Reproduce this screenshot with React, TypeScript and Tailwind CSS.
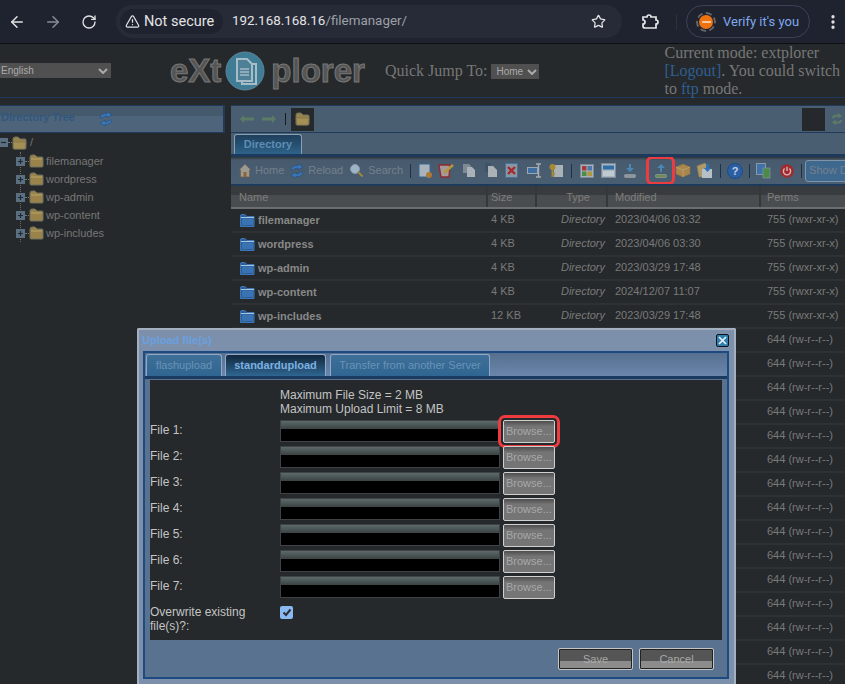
import { ArrowLeft, ArrowRight, EllipsisVertical, RotateCw, Star, TriangleAlert } from "lucide-react";

const SANS = "font-['Liberation_Sans',Arial,sans-serif]";
const SERIF = "font-['Liberation_Serif','Times_New_Roman',serif]";

const Folder = ({ open = false }: { open?: boolean }) => (
  <svg width="15" height="14" viewBox="0 0 15 14" className="shrink-0">
    <path d="M1 3 Q1 1 3 1 H6 L8 3 H13 Q14 3 14 4 V12 Q14 13 13 13 H2 Q1 13 1 12 Z" fill="#9a834a" stroke="#6f6f60" strokeWidth="1" />
    {open ? <path d="M1 6 H14 L13 13 H2 Z" fill="#a68f52" stroke="#77715a" strokeWidth="0.7" /> : <path d="M2 5 H13" stroke="#b8a468" strokeWidth="1" />}
  </svg>
);

const BlueFolder = () => (
  <svg width="15" height="13" viewBox="0 0 15 13" className="shrink-0">
    <path d="M0.5 2 Q0.5 0.5 2 0.5 H5 L7 2.5 H14 V12.5 H0.5 Z" fill="#2a5c96" stroke="#3f76b4" />
    <path d="M2 4.5 H13 V11 H2 Z" fill="#3a73b3" />
    <path d="M1 3.5 H14" stroke="#a9c4dc" strokeWidth="1" />
  </svg>
);

const RefreshBlue = () => (
  <svg width="14" height="16" viewBox="1 0 14 16" className="shrink-0">
    <path d="M2 7 Q3 2 9 2.5 V0.8 L14 4 L9 7 V5 Q5 5 4.5 7 Z" fill="#3a77b8" stroke="#244e80" strokeWidth="0.6" />
    <path d="M14 9 Q13 14 7 13.5 V15.2 L2 12 L7 9 V11 Q11 11 11.5 9 Z" fill="#3a77b8" stroke="#244e80" strokeWidth="0.6" />
  </svg>
);

const TreeBox = ({ minus = false }: { minus?: boolean }) => (
  <span className="flex h-[9px] w-[9px] shrink-0 items-center justify-center bg-[#5c6f80]">
    <svg width="7" height="7" viewBox="0 0 7 7">
      <path d={minus ? "M1 3.5 H6" : "M1 3.5 H6 M3.5 1 V6"} stroke="#1d2a36" strokeWidth="1.2" />
    </svg>
  </span>
);

const Sep = ({ className }: { className: string }) => <span className={`h-[14px] w-px shrink-0 bg-[#1c3047] ${className}`} />;

const ToolIcons: Record<string, React.ReactNode> = {
  home: (
    <svg width="14" height="15" viewBox="0 0 14 15">
      <path d="M7 1 L13 7 H11.5 V14 H2.5 V7 H1 Z" fill="#9a9a90" stroke="#6c5c50" strokeWidth="0.7" />
      <rect x="5.5" y="9" width="3" height="5" fill="#94623a" />
    </svg>
  ),
  search: (
    <svg width="15" height="15" viewBox="0 0 15 15">
      <circle cx="6" cy="6" r="4.5" fill="#9cb4c6" stroke="#8a9aa6" />
      <path d="M9.5 9.5 L13.5 13.5" stroke="#a7853f" strokeWidth="2" />
    </svg>
  ),
  add: (
    <svg width="15" height="16" viewBox="0 0 15 16">
      <rect x="1" y="1" width="11" height="13" fill="#a9b3bb" stroke="#3d6594" />
      <circle cx="11" cy="12" r="3" fill="#ad7a36" />
    </svg>
  ),
  edit: (
    <svg width="17" height="15" viewBox="0 0 17 15">
      <path d="M1 2 H12 L11 14 H3 Z" fill="#a89a9a" stroke="#8f2a2e" strokeWidth="1.4" />
      <path d="M6 10 L15 2" stroke="#b09a3c" strokeWidth="2.4" />
    </svg>
  ),
  copy: (
    <svg width="14" height="15" viewBox="0 0 14 15">
      <path d="M1 1 H7 L9 3 V10 H1 Z" fill="#7f8a94" />
      <path d="M5 4 H10 L13 7 V14 H5 Z" fill="#aab2b8" />
    </svg>
  ),
  move: (
    <svg width="13" height="15" viewBox="0 0 13 15">
      <path d="M0 0 H6 V9 H0 Z" fill="#3f5268" />
      <path d="M3 3 H8 L12 7 V14 H3 Z" fill="#aab2b8" />
    </svg>
  ),
  del: (
    <svg width="14" height="15" viewBox="0 0 14 15">
      <rect x="0.5" y="0.5" width="12" height="14" fill="#8a97a3" stroke="#4a7199" />
      <path d="M3 4 L10 11 M10 4 L3 11" stroke="#a8282c" strokeWidth="2.4" />
    </svg>
  ),
  rename: (
    <svg width="16" height="15" viewBox="0 0 16 15">
      <rect x="0.5" y="4.5" width="10" height="6" fill="#3f6ea0" stroke="#9aa6b0" />
      <path d="M9 1 H14 M11.5 1 V14 M9 14 H14" stroke="#a9adb0" strokeWidth="1.4" />
    </svg>
  ),
  key: (
    <svg width="14" height="15" viewBox="0 0 14 15">
      <rect x="5" y="2" width="9" height="12" fill="#aab2b8" />
      <circle cx="3.5" cy="4" r="3" fill="#a88a34" />
      <path d="M3.5 6 V14 M3.5 11 H6" stroke="#a88a34" strokeWidth="2" />
    </svg>
  ),
  view: (
    <svg width="14" height="14" viewBox="0 0 14 14">
      <rect x="0.5" y="0.5" width="13" height="13" fill="#a8b0b8" stroke="#7c8a98" />
      <rect x="2" y="2" width="4.5" height="4.5" fill="#a8393a" />
      <rect x="7.5" y="2" width="4.5" height="4.5" fill="#4a7bb0" />
      <rect x="2" y="7.5" width="4.5" height="4.5" fill="#4f8c4a" />
      <rect x="7.5" y="7.5" width="4.5" height="4.5" fill="#b0963e" />
    </svg>
  ),
  win: (
    <svg width="15" height="15" viewBox="0 0 15 15">
      <rect x="0.5" y="0.5" width="14" height="14" fill="#a8b4bf" stroke="#7c8a98" />
      <rect x="2" y="2.5" width="11" height="4" fill="#2f6ea8" />
      <rect x="2" y="8" width="11" height="5" fill="#c0c8d0" />
    </svg>
  ),
  down: (
    <svg width="14" height="16" viewBox="0 0 14 16">
      <path d="M6 1 H8 V5 H11 L7 9 L3 5 H6 Z" fill="#4a86b4" />
      <rect x="1.5" y="11.5" width="11" height="3" rx="1" fill="#8f979c" stroke="#a9b1b6" strokeWidth="0.5" />
    </svg>
  ),
  up: (
    <svg width="14" height="16" viewBox="0 0 14 16">
      <path d="M6 9 H8 V5 H11 L7 1 L3 5 H6 Z" fill="#4a86b4" />
      <rect x="1.5" y="11.5" width="11" height="3" rx="1" fill="#6f8a55" stroke="#a9b1b6" strokeWidth="0.5" />
    </svg>
  ),
  box: (
    <svg width="16" height="15" viewBox="0 0 16 15">
      <path d="M1 4 L8 1 L15 4 V11 L8 14 L1 11 Z" fill="#a9864e" stroke="#8a7040" strokeWidth="0.6" />
      <path d="M1 4 L8 7 L15 4 M8 7 V14" stroke="#c2a56c" strokeWidth="0.8" fill="none" />
    </svg>
  ),
  extract: (
    <svg width="17" height="17" viewBox="0 0 17 17">
      <path d="M1 4 L9 1 L12 4 V15 H3 Z" fill="#ad9a68" stroke="#8a7a50" strokeWidth="0.6" />
      <rect x="6" y="7" width="10" height="9" fill="#b6c0c8" />
      <path d="M10 2 H13 V6 H15 L11.5 10 L8 6 H10 Z" fill="#2f70b4" />
    </svg>
  ),
  help: (
    <svg width="16" height="16" viewBox="0 0 16 16">
      <circle cx="8" cy="8" r="7.5" fill="#2a5fa6" stroke="#1f4a84" />
      <text x="8" y="12" textAnchor="middle" fontSize="11" fontWeight="700" fill="#c6d2e0" fontFamily="Liberation Sans">?</text>
    </svg>
  ),
  admin: (
    <svg width="15" height="16" viewBox="0 0 15 16">
      <rect x="0.5" y="0.5" width="9" height="11" fill="#3f72aa" stroke="#8a98a6" />
      <rect x="7" y="5" width="7" height="10" fill="#4c8a4a" stroke="#8a98a6" strokeWidth="0.6" />
    </svg>
  ),
  power: (
    <svg width="14" height="14" viewBox="0 0 14 14">
      <circle cx="7" cy="7" r="6.8" fill="#a02a2e" />
      <path d="M4.6 4.6 A3.6 3.6 0 1 0 9.4 4.6 M7 2.8 V7" stroke="#d4b6b6" strokeWidth="1.4" fill="none" />
    </svg>
  ),
};

const Tool = ({ name, className }: { name: string; className: string }) => (
  <span className={`flex shrink-0 items-center ${className}`}>{ToolIcons[name]}</span>
);

const rows = [
  ["filemanager", "4 KB", "Directory", "2023/04/06 03:32", "755 (rwxr-xr-x)"],
  ["wordpress", "4 KB", "Directory", "2023/04/06 03:30", "755 (rwxr-xr-x)"],
  ["wp-admin", "4 KB", "Directory", "2023/03/29 17:48", "755 (rwxr-xr-x)"],
  ["wp-content", "4 KB", "Directory", "2024/12/07 11:07", "755 (rwxr-xr-x)"],
  ["wp-includes", "12 KB", "Directory", "2023/03/29 17:48", "755 (rwxr-xr-x)"],
];

const fileRows = Array.from({ length: 15 }, (_, i) => i);
const treeItems = ["filemanager", "wordpress", "wp-admin", "wp-content", "wp-includes"];
const uploads = [1, 2, 3, 4, 5, 6, 7];

const HeadCell = ({ label, className }: { label: string; className: string }) => (
  <div className={`flex h-full shrink-0 items-center border-r-2 border-[#34383a] pt-px ${className}`}>{label}</div>
);

const DialogButton = ({ label }: { label: string }) => (
  <div className="flex h-[22px] w-[75px] items-center justify-center overflow-hidden rounded-[2px] border border-[#c4c4c4] bg-[linear-gradient(#555_0,#555_58%,#8c8c8c_58%,#8c8c8c_100%)] text-[11px] text-[#a9a9a9] shadow-[inset_0_0_0_1px_#222]">
    {label}
  </div>
);

export default function App() {
  return (
    <div className={`relative h-[684px] w-[845px] overflow-hidden bg-[#25292b] ${SANS}`}>
      {/* browser bar */}
      <div className="flex h-[44px] items-center border-b border-[#0e0f13] bg-[#1f2330] font-['Roboto',sans-serif] text-[#e3e3e3]">
        <ArrowLeft size={18} strokeWidth={2} className="ml-[8px]" />
        <ArrowRight size={18} strokeWidth={2} className="ml-[18px] text-[#8b8d94]" />
        <RotateCw size={16} strokeWidth={2} className="ml-[19px]" />
        <div className="ml-[19px] flex h-[33px] w-[506px] items-center rounded-full bg-[#272b38] pl-[4px]">
          <div className="flex h-[25px] w-[103px] items-center rounded-full bg-[#1f2330] pl-[5px] text-[14.5px]">
            <TriangleAlert size={15} strokeWidth={2} />
            <span className="ml-[4px]">Not secure</span>
          </div>
          <span className="ml-[9px] text-[13.4px]">
            192.168.168.16<span className="text-[#9ea0a6]">/filemanager/</span>
          </span>
          <Star size={15} strokeWidth={2} className="ml-auto mr-[16px]" />
        </div>
        <svg width="17" height="16" viewBox="0 0 17 16" className="ml-[20px]">
          <path d="M1 3 H5 Q5 1 7 1 Q9 1 9 3 H14 V6 Q16 6 16 8 Q16 10 14 10 V14 H3 Q1 14 1 12 V10 Q3 10 3 8 Q3 6 1 6 Z" fill="none" stroke="#e8e8e8" strokeWidth="1.7" />
        </svg>
        <span className="ml-[17px] h-[16px] w-px bg-[#2d313c]" />
        <div className="ml-[9px] flex h-[33px] w-[124px] items-center rounded-full border border-[#3d4357] pl-[9px]">
          <span className="flex h-[20px] w-[20px] items-center justify-center rounded-full border-2 border-dashed border-[#666]">
            <span className="flex h-[14px] w-[14px] items-center justify-center rounded-full bg-[#f0720f]">
              <span className="h-[2px] w-[9px] bg-[#f6c9a0]" />
            </span>
          </span>
          <span className="ml-[7px] text-[13px] text-[#7fa8ee]">Verify it's you</span>
        </div>
        <EllipsisVertical size={18} strokeWidth={2.4} className="ml-[14px]" />
      </div>

      {/* extplorer header */}
      <div className="flex h-[54px] items-center whitespace-nowrap border-b border-[#1f3a5a] bg-[#25292b]">
        <div className="flex h-[15px] w-[111px] shrink-0 items-center justify-between bg-[#505050] pl-[1px] pr-[3px] text-[10px] text-[#aaa]">
          English
          <svg width="10" height="6" viewBox="0 0 10 6"><path d="M1 1 L5 5 L9 1" stroke="#aaa" strokeWidth="2" fill="none" /></svg>
        </div>
        <div className="ml-[59px] flex h-[40px] shrink-0 items-center text-[33px] font-bold leading-none text-[#555] [-webkit-text-stroke:1px_#777]">
          <span>eXt</span>
          <svg width="40" height="40" viewBox="0 0 40 40" className="ml-[4px] mr-[6px] shrink-0">
            <circle cx="20" cy="20" r="19" fill="#3f7d96" stroke="#60859a" strokeWidth="1" />
            <path d="M12 8 H22 L27 13 V30 H12 Z" fill="#4d7f96" stroke="#a7bcc6" strokeWidth="2" />
            <path d="M27 13 H31 V33 H17 V30" fill="none" stroke="#a7bcc6" strokeWidth="2" />
            <path d="M15 18 H24 M15 21 H24 M15 24 H24" stroke="#a7bcc6" strokeWidth="1.3" />
          </svg>
          <span>plorer</span>
        </div>
        <span className={`ml-[20px] shrink-0 text-[16px] text-[#777] ${SERIF}`}>Quick Jump To:</span>
        <div className="ml-[4px] mt-[2px] flex h-[15px] w-[48px] shrink-0 items-center justify-between bg-[#505050] pl-[5px] pr-[2px] text-[10px] text-[#aaa]">
          Home
          <svg width="10" height="6" viewBox="0 0 10 6"><path d="M1 1 L5 5 L9 1" stroke="#aaa" strokeWidth="2" fill="none" /></svg>
        </div>
        <div className={`ml-[125px] w-[180px] shrink-0 whitespace-normal text-[16px] leading-[18px] text-[#777] ${SERIF}`}>
          Current mode: extplorer <span className="text-[#2f5f92]">[Logout]</span>. You could switch to <span className="text-[#2f5f92]">ftp</span> mode.
        </div>
      </div>

      {/* panels */}
      <div className="flex pt-[7px]">
        <div className="w-[225px] shrink-0">
          <div className="flex h-[28px] items-center border-y border-r-2 border-[#1f3a5a] bg-[linear-gradient(#45596c_0,#45596c_40%,#4e647b_40%,#4e647b_100%)] pl-[1px] text-[11px] font-bold text-[#31577f]">
            <span className="-mt-[3px]">Directory Tree</span>
            <span className="ml-[24px]"><RefreshBlue /></span>
          </div>
          <div className="pt-[1px] text-[11px] text-[#777]">
            <div className="flex h-[17px] items-center">
              <span className="-ml-[1px]"><TreeBox minus /></span>
              <span className="w-[4px] border-t border-dotted border-[#777]" />
              <Folder open />
              <span className="ml-[3px]">/</span>
            </div>
            <div className="ml-[20px] mt-[1px] border-l border-dotted border-[#6a6a6a]">
              {treeItems.map((item) => (
                <div key={item} className="-ml-[5px] flex h-[18px] items-center">
                  <TreeBox />
                  <span className="w-[4px] border-t border-dotted border-[#777]" />
                  <Folder />
                  <span className="ml-[2px]">{item}</span>
                </div>
              ))}
            </div>
          </div>
        </div>

        <div className="ml-[6px] min-w-0 flex-1">
          <div className="flex h-[28px] items-center border-y border-[#1f3a5a] bg-[#4a5e72] pl-[9px]">
            <svg width="14" height="8" viewBox="0 0 14 8"><path d="M0 4 L4 0 V2.5 H14 V5.5 H4 V8 Z" fill="#5c7b66" /></svg>
            <svg width="14" height="8" viewBox="0 0 14 8" className="ml-[8px]"><path d="M14 4 L10 0 V2.5 H0 V5.5 H10 V8 Z" fill="#5c7b66" /></svg>
            <span className="ml-[9px] h-[12px] w-px bg-[#1c1c1c]" />
            <span className="ml-[5px] flex h-[23px] w-[23px] items-center justify-center bg-[#25292b]">
              <Folder open />
            </span>
            <span className="ml-[488px] h-[23px] w-[23px] bg-[#25292b]" />
            <span className="ml-[5px]">
              <svg width="14" height="14" viewBox="0 0 16 16" className="shrink-0">
                <path d="M2 7 Q3 2 9 3 V1 L14 4.5 L9 7 V5 Q5 5 4.5 7 Z" fill="#5c7b66" />
                <path d="M14 9 Q13 14 7 13 V15 L2 11.5 L7 9 V11 Q11 11 11.5 9 Z" fill="#5c7b66" />
              </svg>
            </span>
          </div>
          <div className="flex h-[24px] items-end border-b-[3px] border-[#1d3a5c] bg-[#4a5e72] pl-[3px]">
            <div className="flex h-[20px] w-[68px] items-center justify-center rounded-t-[3px] border-x border-t border-[#8aa0b4] bg-[linear-gradient(#1f3f5b,#2e6288)] text-[11px] font-bold text-[#5d8cb5]">
              Directory
            </div>
          </div>
          <div className="flex h-[29px] items-center overflow-hidden border-b-2 border-[#1d3a5c] bg-[linear-gradient(#2f3436_0,#485b6e_3px,#4a5e72_100%)] pl-[7px] text-[11px] text-[#74808b]">
            <Tool name="home" className="" />
            <span className="ml-[3px]">Home</span>
            <span className="ml-[6px]"><RefreshBlue /></span>
            <span className="ml-[4px]">Reload</span>
            <Tool name="search" className="ml-[6px]" />
            <span className="ml-[4px]">Search</span>
            <Sep className="ml-[7px]" />
            <Tool name="add" className="ml-[7px]" />
            <Tool name="edit" className="ml-[5px]" />
            <Tool name="copy" className="ml-[7px]" />
            <Tool name="move" className="ml-[9px]" />
            <Tool name="del" className="ml-[7px]" />
            <Tool name="rename" className="ml-[8px]" />
            <Tool name="key" className="ml-[6px]" />
            <Sep className="ml-[8px]" />
            <Tool name="view" className="ml-[8px]" />
            <Tool name="win" className="ml-[7px]" />
            <Tool name="down" className="ml-[7px]" />
            <Tool name="up" className="ml-[12px] h-[23px] w-[23px] justify-center rounded-[3px] outline-[3px] outline-[#ee3b3f]" />
            <Tool name="box" className="ml-[3px]" />
            <Tool name="extract" className="ml-[5px]" />
            <Sep className="ml-[7px]" />
            <Tool name="help" className="ml-[6px]" />
            <Sep className="ml-[6px]" />
            <Tool name="admin" className="ml-[6px]" />
            <Tool name="power" className="ml-[9px]" />
            <Sep className="ml-[7px]" />
            <div className="ml-[3px] flex h-[22px] w-[60px] shrink-0 items-center rounded-[3px] border border-[#7e94aa] bg-[#3f688f] pl-[3px] text-[#74808b]">
              Show D
            </div>
          </div>

          <div className="flex h-[23px] items-center border-b-2 border-[#6b6f71] bg-[linear-gradient(#383c3e_0,#383c3e_45%,#4a4d4f_45%,#4a4d4f_100%)] pl-[2px] text-[11px] text-[#7d7d7d]">
            <HeadCell label="Name" className="w-[255px] pl-[6px]" />
            <HeadCell label="Size" className="w-[49px] pl-[3px]" />
            <HeadCell label="Type" className="w-[71px] justify-end pr-[16px]" />
            <HeadCell label="Modified" className="w-[153px] pl-[7px]" />
            <div className="pl-[6px] pt-px">Perms</div>
          </div>
          {rows.map((row) => (
            <div key={row[0]} className="flex h-[24px] items-center border-b-2 border-[#2e3234] pl-[2px] text-[11px] text-[#7a7a7a]">
              <div className="flex w-[255px] shrink-0 items-center pl-[7px] font-bold text-[#888]">
                <BlueFolder />
                <span className="ml-[3px]">{row[0]}</span>
              </div>
              <div className="-mt-px w-[49px] shrink-0 pl-[3px]">{row[1]}</div>
              <div className="-mt-px w-[71px] shrink-0 pr-[3px] text-right italic">{row[2]}</div>
              <div className="-mt-px w-[153px] shrink-0 pl-[7px]">{row[3]}</div>
              <div className="-mt-px whitespace-nowrap pl-[6px]">{row[4]}</div>
            </div>
          ))}
          {fileRows.map((i) => (
            <div key={i} className="flex h-[24px] items-center border-b-2 border-[#2e3234] pl-[536px] text-[11px] text-[#7a7a7a]">
              <span className="-mt-px whitespace-nowrap">644 (rw-r--r--)</span>
            </div>
          ))}
        </div>
      </div>

      {/* upload dialog */}
      <div className="absolute left-[137px] top-[328px] h-[366px] w-[599px] rounded-t-[2px] border-x-2 border-t-2 border-[#a4b0c0] bg-[#7c90ab] pl-[4px] pr-[5px]">
        <div className="flex h-[21px] items-center justify-between text-[11px] font-bold text-[#6aa0e0]">
          <span className="-ml-[1px]">Upload file(s)</span>
          <span className="flex h-[13px] w-[13px] items-center justify-center rounded-[2px] border border-[#111] bg-[#2d7fb0]">
            <svg width="9" height="9" viewBox="0 0 9 9"><path d="M1 1 L8 8 M8 1 L1 8" stroke="#e8f2f8" strokeWidth="1.7" /></svg>
          </span>
        </div>
        <div className="h-[328px] border-2 border-[#1d4a80] bg-[#59728f]">
          <div className="flex h-[26px] items-end border-b-[3px] border-[#1b3a5f] bg-[linear-gradient(#56708f,#6a86ab)] pl-[1px] text-[11px]">
            <div className="flex h-[22px] w-[76px] items-center justify-center rounded-t-[3px] border-x border-t border-[#92a8c8] bg-[linear-gradient(#3f6f98,#2f6691)] text-[#6b93b8]">flashupload</div>
            <div className="ml-[3px] flex h-[22px] w-[101px] items-center justify-center rounded-t-[3px] border-x border-t border-[#92a8c8] bg-[linear-gradient(#12283d,#2f6691)] font-bold text-[#7cb0e0]">standardupload</div>
            <div className="ml-[4px] flex h-[22px] w-[160px] items-center justify-center rounded-t-[3px] border-x border-t border-[#92a8c8] bg-[linear-gradient(#3f6f98,#2f6691)] text-[#6b93b8]">Transfer from another Server</div>
          </div>
          <div className="mx-[5px] mt-px flex h-[260px] flex-col bg-[#25292b] text-[12px] leading-[14px] text-[#c4c4c4]">
            <div className="pl-[130px] pt-[8px]">
              <div>Maximum File Size = 2 MB</div>
              <div>Maximum Upload Limit = 8 MB</div>
            </div>
            <div className="mt-[2px]">
              {uploads.map((n) => (
                <div key={n} className="flex h-[26px] items-center">
                  <span className="-mt-[2px] w-[130px] shrink-0">File {n}:</span>
                  <div className="h-[22px] w-[220px] shrink-0 border border-[#3f4345] bg-[linear-gradient(#5c6a6a_0,#3c4444_38%,#000_40%,#000_100%)]" />
                  <div className={`ml-[3px] flex h-[23px] w-[52px] shrink-0 items-center overflow-hidden whitespace-nowrap rounded-[2px] border border-[#d0d0d0] bg-[linear-gradient(#4d4d4d_0,#757575_25%,#757575_100%)] pl-[2px] text-[11px] text-[#a8a8a8] ${n === 1 ? "outline-[3px] outline-offset-2 outline-[#ee3b3f]" : ""}`}>
                    Browse...
                  </div>
                </div>
              ))}
            </div>
            <div className="mt-[5px] flex items-start">
              <span className="w-[130px] shrink-0 pr-[30px]">Overwrite existing file(s)?:</span>
              <span className="mt-[1px] flex h-[13px] w-[13px] items-center justify-center rounded-[2px] bg-[#8ab8f0]">
                <svg width="10" height="9" viewBox="0 0 10 9"><path d="M1.5 4.5 L4 7 L8.5 1.5" stroke="#2a2f38" strokeWidth="2" fill="none" /></svg>
              </span>
            </div>
          </div>
          <div className="flex justify-end gap-[6px] pr-[13px] pt-[8px]">
            <DialogButton label="Save" />
            <DialogButton label="Cancel" />
          </div>
        </div>
      </div>
    </div>
  );
}
